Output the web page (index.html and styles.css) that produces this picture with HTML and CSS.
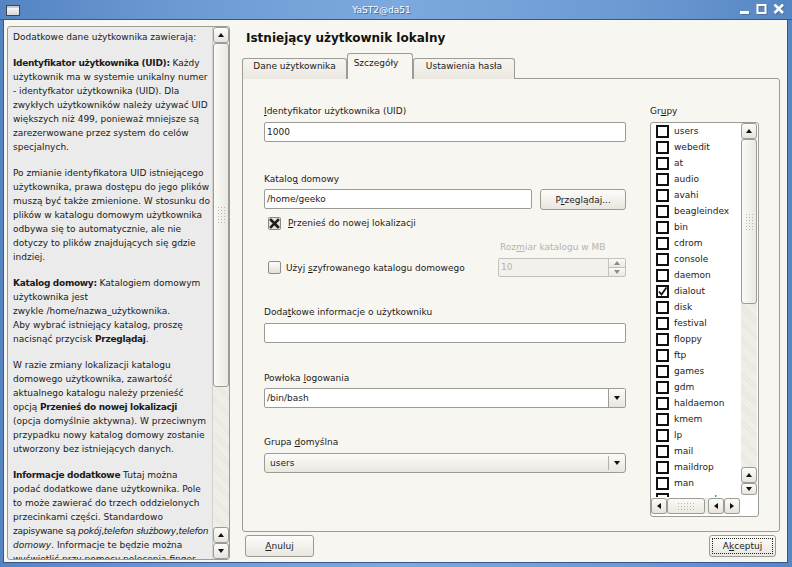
FILE: index.html
```html
<!DOCTYPE html>
<html lang="pl">
<head>
<meta charset="utf-8">
<title>YaST2@da51</title>
<link rel="stylesheet" href="styles.css">
</head>
<body>
<div class="window">
  <div class="titlebar">
    <span class="wicon"></span>
    <span class="wtitle">YaST2@da51</span>
    <span class="wbtns">
      <svg class="wb" width="12" height="12" viewBox="0 0 12 12"><rect x="2" y="8" width="9" height="3" fill="#4d6f9c"/><rect x="1" y="7" width="9" height="3" fill="#fff"/></svg>
      <svg class="wb" width="12" height="12" viewBox="0 0 12 12"><rect x="2.5" y="2" width="8" height="8" fill="none" stroke="#4d6f9c" stroke-width="2"/><rect x="1.5" y="1" width="8" height="8" fill="none" stroke="#fff" stroke-width="2"/></svg>
      <svg class="wb" width="12" height="12" viewBox="0 0 12 12"><path d="M2.5 1.5 L11 10 M11 1.5 L2.5 10" stroke="#4d6f9c" stroke-width="2.6"/><path d="M1.5 0.5 L10 9 M10 0.5 L1.5 9" stroke="#fff" stroke-width="2.6"/></svg>
    </span>
  </div>
  <div class="client">
    <aside class="help">
      <div class="help-text">
        <p>Dodatkowe dane użytkownika zawierają:</p>
        <p><b>Identyfikator użytkownika (UID):</b> Każdy<br>użytkownik ma w systemie unikalny numer<br>- identyfkator użytkownika (UID). Dla<br>zwykłych użytkowników należy używać UID<br>większych niż 499, ponieważ mniejsze są<br>zarezerwowane przez system do celów<br>specjalnych.</p>
        <p>Po zmianie identyfikatora UID istniejącego<br>użytkownika, prawa dostępu do jego plików<br>muszą być także zmienione. W stosunku do<br>plików w katalogu domowym użytkownika<br>odbywa się to automatycznie, ale nie<br>dotyczy to plików znajdujących się gdzie<br>indziej.</p>
        <p><b>Katalog domowy:</b> Katalogiem domowym<br>użytkownika jest<br>zwykle /home/nazwa_użytkownika.<br>Aby wybrać istniejący katalog, proszę<br>nacisnąć przycisk <b>Przeglądaj</b>.</p>
        <p>W razie zmiany lokalizacji katalogu<br>domowego użytkownika, zawartość<br>aktualnego katalogu należy przenieść<br>opcją <b>Przenieś do nowej lokalizacji</b><br>(opcja domyślnie aktywna). W przeciwnym<br>przypadku nowy katalog domowy zostanie<br>utworzony bez istniejących danych.</p>
        <p><b>Informacje dodatkowe</b> Tutaj można<br>podać dodatkowe dane użytkownika. Pole<br>to może zawierać do trzech oddzielonych<br>przecinkami części. Standardowo<br><span class="tight">zapisywane są <i>pokój</i>,<i>telefon służbowy</i>,<i>telefon</i></span><br><i>domowy</i>. Informacje te będzie można<br>wyświetlić przy pomocy polecenia finger.</p>
      </div>
      <div class="vscroll help-scroll">
        <div class="sb-btn"><span class="tri-up"></span></div>
        <div class="sb-thumb help-thumb"><span class="grip"></span></div>
        <div class="sb-trough"></div>
        <div class="sb-btn"><span class="tri-up"></span></div>
        <div class="sb-btn"><span class="tri-down"></span></div>
      </div>
    </aside>

    <section class="main">
      <h1 class="page-title">Istniejący użytkownik lokalny</h1>
      <div class="tabs">
        <div class="tab tab-1">Dane użytkownika</div>
        <div class="tab tab-2 active">Szczegóły</div>
        <div class="tab tab-3">Ustawienia hasła</div>
      </div>
      <div class="notebook">
        <div class="form">
          <div class="lbl"><u>I</u>dentyfikator użytkownika (UID)</div>
          <div class="entry e-uid">1000</div>

          <div class="lbl l-home">Katalo<u>g</u> domowy</div>
          <div class="home-row">
            <div class="entry e-home">/home/geeko</div>
            <div class="btn btn-browse">P<u>r</u>zeglądaj...</div>
          </div>
          <div class="check-row move-row">
            <svg class="xbox" width="13" height="13" viewBox="0 0 13 13"><rect x="0.5" y="0.5" width="12" height="12" rx="1" fill="#e4e2dc" stroke="#8a8883"/><path d="M3 3 L10 10 M10 3 L3 10" stroke="#1e1e1e" stroke-width="2.6" stroke-linecap="square"/></svg>
            <span><u>P</u>rzenieś do nowej lokalizacji</span>
          </div>

          <div class="enc-row">
            <div class="check-row enc-check">
              <span class="cbox"></span>
              <span>Użyj <u>s</u>zyfrowanego katalogu domowego</span>
            </div>
            <div class="size-col">
              <div class="lbl dis">Roz<u>m</u>iar katalogu w MB</div>
              <div class="spin">
                <span class="spin-val">10</span>
                <span class="spin-btns">
                  <span class="spin-b"><span class="tri-up gray"></span></span>
                  <span class="spin-b"><span class="tri-down gray"></span></span>
                </span>
              </div>
            </div>
          </div>

          <div class="lbl l-info">Doda<u>t</u>kowe informacje o użytkowniku</div>
          <div class="entry e-info"></div>

          <div class="lbl l-shell">Powłoka <u>l</u>ogowania</div>
          <div class="combo-entry">
            <span class="ce-text">/bin/bash</span>
            <span class="ce-btn"><span class="tri-down"></span></span>
          </div>

          <div class="lbl l-group">Grupa <u>d</u>omyślna</div>
          <div class="combo">
            <span class="c-text">users</span>
            <span class="c-arrow"><span class="tri-down"></span></span>
          </div>
        </div>

        <div class="groups">
          <div class="lbl">Gr<u>u</u>py</div>
          <div class="glist">
            <div class="viewport">
              <div class="gi"><span class="gcb"></span>users</div>
              <div class="gi"><span class="gcb"></span>webedit</div>
              <div class="gi"><span class="gcb"></span>at</div>
              <div class="gi"><span class="gcb"></span>audio</div>
              <div class="gi"><span class="gcb"></span>avahi</div>
              <div class="gi"><span class="gcb"></span>beagleindex</div>
              <div class="gi"><span class="gcb"></span>bin</div>
              <div class="gi"><span class="gcb"></span>cdrom</div>
              <div class="gi"><span class="gcb"></span>console</div>
              <div class="gi"><span class="gcb"></span>daemon</div>
              <div class="gi"><span class="gcb checked"><svg width="9" height="9" viewBox="0 0 9 9"><path d="M1 4.5 L3.5 7.5 L8.5 0.5" fill="none" stroke="#111" stroke-width="1.8"/></svg></span>dialout</div>
              <div class="gi"><span class="gcb"></span>disk</div>
              <div class="gi"><span class="gcb"></span>festival</div>
              <div class="gi"><span class="gcb"></span>floppy</div>
              <div class="gi"><span class="gcb"></span>ftp</div>
              <div class="gi"><span class="gcb"></span>games</div>
              <div class="gi"><span class="gcb"></span>gdm</div>
              <div class="gi"><span class="gcb"></span>haldaemon</div>
              <div class="gi"><span class="gcb"></span>kmem</div>
              <div class="gi"><span class="gcb"></span>lp</div>
              <div class="gi"><span class="gcb"></span>mail</div>
              <div class="gi"><span class="gcb"></span>maildrop</div>
              <div class="gi"><span class="gcb"></span>man</div>
              <div class="gi"><span class="gcb"></span>messagebus</div>
            </div>
            <div class="vscroll list-scroll">
              <div class="sb-btn"><span class="tri-up"></span></div>
              <div class="sb-thumb list-thumb"><span class="grip"></span></div>
              <div class="sb-trough"></div>
              <div class="sb-btn"><span class="tri-up"></span></div>
              <div class="sb-btn short"><span class="tri-down"></span></div>
            </div>
            <div class="hscroll">
              <div class="hb"><span class="tri-left"></span></div>
              <div class="hthumb"><span class="hgrip"></span></div>
              <div class="hgap"></div>
              <div class="hb"><span class="tri-left"></span></div>
              <div class="hb"><span class="tri-right"></span></div>
            </div>
          </div>
        </div>
      </div>
      <div class="actions">
        <div class="btn btn-cancel"><u>A</u>nuluj</div>
        <div class="btn btn-ok"><span class="focus">A<u>k</u>ceptuj</span></div>
      </div>
    </section>
  </div>
</div>
</body>
</html>
```

FILE: styles.css
```css
* { box-sizing: border-box; }
html, body { margin: 0; padding: 0; }
body {
  width: 792px; height: 567px; overflow: hidden;
  font-family: "DejaVu Sans", sans-serif;
  font-size: 9px;
  color: #1b1b1b;
  background: #5b8ac6;
}
u { text-decoration: underline; text-underline-offset: 1px; }

.window {
  width: 792px; height: 567px;
  display: flex; flex-direction: column;
  background: linear-gradient(90deg, #5484c2 0%, #6b99d2 22%, #7caadf 50%, #6b99d2 80%, #5686c3 100%);
}

/* title bar */
.titlebar {
  height: 20px; flex: none;
  border-bottom: 1px solid #35578a;
  display: flex; align-items: center;
  padding: 0 6px 0 6px;
}
.wicon {
  width: 14px; height: 11px; margin-top: 2px;
  border: 1px solid #41464e;
  background: linear-gradient(#ffffff, #d5d7db);
  box-shadow: inset 0 2px 0 #c9ccd2;
}
.wtitle {
  flex: 1; text-align: center;
  color: #fff; font-size: 9px;
  text-shadow: 1px 1px 0 #44679a;
  padding-left: 4px;
}
.wbtns { display: flex; gap: 5px; margin-right: 1px; margin-top: 1px; }
.wb { display: block; }

/* client */
.client {
  flex: 1;
  margin: 0 4px 4px 3px;
  border: 1px solid #35578a; border-top: 0;
  background: #f8f6f1;
  display: flex;
  padding: 6px 7px 2px 3px;
  gap: 12px;
  min-height: 0;
}

/* help panel */
.help {
  width: 223px;
  border: 1px solid #9d9b95;
  border-radius: 3px;
  background: #ebebeb;
  display: flex;
  overflow: hidden;
}
.help-text {
  flex: 1;
  padding: 3px 0 0 5px;
  line-height: 14px;
  white-space: nowrap;
  overflow: hidden;
  color: #1a1a1a;
}
.help-text p { margin: 0 0 12px; }
.help-text b { letter-spacing: -0.3px; }
.help-text .tight { letter-spacing: -0.25px; }

/* scrollbars */
.vscroll { width: 16px; display: flex; flex-direction: column; background: #efece6; }
.help-scroll { border-left: 1px solid #d2d0ca; width: 17px; }
.sb-btn {
  height: 16px; flex: none;
  border: 1px solid #9d9b95; border-radius: 3px;
  background: linear-gradient(#fdfcfa, #e7e4dd);
  display: flex; align-items: center; justify-content: center;
}
.sb-btn.short { height: 12px; }
.sb-thumb {
  flex: none;
  border: 1px solid #9d9b95; border-radius: 3px;
  background: linear-gradient(90deg, #fbfaf7, #ebe8e1);
  display: flex; align-items: center; justify-content: center;
}
.help-thumb { height: 344px; }
.list-thumb { height: 165px; }
.sb-trough {
  flex: 1;
  background: repeating-linear-gradient(45deg, #f3f1ec 0 1px, #e9e6df 1px 2px);
}
.grip {
  width: 8px; height: 18px;
  background-image: radial-gradient(circle, #b9b6ae 0.6px, transparent 0.9px);
  background-size: 3px 3px;
}
.tri-up { width: 0; height: 0; border-left: 3.5px solid transparent; border-right: 3.5px solid transparent; border-bottom: 4px solid #111; }
.tri-down { width: 0; height: 0; border-left: 3.5px solid transparent; border-right: 3.5px solid transparent; border-top: 4px solid #111; }
.tri-left { width: 0; height: 0; border-top: 3.5px solid transparent; border-bottom: 3.5px solid transparent; border-right: 4px solid #111; }
.tri-right { width: 0; height: 0; border-top: 3.5px solid transparent; border-bottom: 3.5px solid transparent; border-left: 4px solid #111; }
.tri-up.gray { border-bottom-color: #8e8c87; }
.tri-down.gray { border-top-color: #8e8c87; }

/* main */
.main { flex: 1; display: flex; flex-direction: column; min-width: 0; }
.page-title {
  margin: 5px 0 0 4px;
  font-size: 12px; font-weight: bold;
  line-height: 15px;
  color: #111;
  flex: none;
}
.tabs {
  margin-top: 7px;
  height: 26px; flex: none;
  display: flex; align-items: flex-end;
  position: relative; z-index: 1;
  margin-bottom: -1px;
}
.tab {
  height: 21px;
  border: 1px solid #9d9b95; border-bottom: 0;
  border-radius: 3px 3px 0 0;
  background: linear-gradient(#f6f4ef, #ebe8e1);
  text-align: center;
  line-height: 14px;
  padding-top: 0;
  white-space: nowrap;
}
.tab-1 { width: 105px; }
.tab-2 { width: 66px; }
.tab-3 { width: 102px; }
.tab.active {
  height: 26px;
  background: #f8f6f1;
  padding-top: 2px;
  padding-right: 8px;
}
.notebook {
  height: 454px; flex: none;
  border: 1px solid #9d9b95;
  border-radius: 0 3px 3px 3px;
  display: flex;
  padding: 25px 20px 0 21px;
  gap: 24px;
}

.lbl { height: 14px; line-height: 14px; white-space: nowrap; }
.lbl.dis { color: #b5b3ad; padding-left: 2px; }
.form { width: 362px; display: flex; flex-direction: column; }
.entry {
  height: 20px;
  border: 1px solid #9d9b95; border-radius: 2px;
  background: #fff;
  line-height: 18px;
  padding-left: 2px;
  white-space: nowrap;
}
.e-uid { margin-top: 4px; }
.l-home { margin-top: 30px; }
.home-row { margin-top: 3px; display: flex; gap: 8px; align-items: flex-start; }
.e-home { width: 269px; }
.btn {
  border: 1px solid #9d9b95; border-radius: 3px;
  background: linear-gradient(#fdfcfa, #e9e6df);
  display: flex; align-items: center; justify-content: center;
  white-space: nowrap;
}
.btn-browse { width: 86px; height: 21px; }
.check-row { display: flex; align-items: center; height: 14px; white-space: nowrap; }
.move-row { margin-top: 6px; padding-left: 4px; gap: 7px; }
.xbox { display: block; }
.enc-row { margin-top: 10px; display: flex; justify-content: space-between; }
.enc-check { align-self: flex-end; height: 19px; padding-left: 4px; gap: 5px; }
.cbox {
  width: 13px; height: 13px;
  border: 1px solid #8f8d88; border-radius: 2px;
  background: linear-gradient(#fdfcfa, #e2dfd8);
}
.size-col { width: 128px; }
.spin {
  margin-top: 4px;
  height: 19px;
  border: 1px solid #c4c1ba; border-radius: 2px;
  background: #f3f1ec;
  display: flex;
}
.spin-val { flex: 1; color: #b5b3ad; line-height: 17px; padding-left: 2px; }
.spin-btns { width: 17px; display: flex; flex-direction: column; border-left: 1px solid #c4c1ba; }
.spin-b {
  flex: 1; display: flex; align-items: center; justify-content: center;
  background: linear-gradient(#fbfaf7, #ebe8e1);
}
.spin-b + .spin-b { border-top: 1px solid #c4c1ba; }

.l-info { margin-top: 28px; }
.e-info { margin-top: 4px; }
.l-shell { margin-top: 28px; }
.combo-entry {
  margin-top: 3px;
  height: 20px;
  border: 1px solid #9d9b95; border-radius: 2px;
  background: #fff;
  display: flex;
}
.ce-text { flex: 1; line-height: 18px; padding-left: 2px; }
.ce-btn {
  width: 17px;
  border-left: 1px solid #9d9b95;
  background: linear-gradient(#fdfcfa, #e9e6df);
  display: flex; align-items: center; justify-content: center;
}
.l-group { margin-top: 27px; }
.combo {
  margin-top: 4px;
  height: 20px;
  border: 1px solid #9d9b95; border-radius: 3px;
  background: linear-gradient(#fdfcfa, #e9e6df);
  display: flex;
}
.c-text { flex: 1; line-height: 18px; padding-left: 5px; }
.c-arrow {
  width: 17px; margin: 2px 0;
  border-left: 1px solid #b3b0a9;
  display: flex; align-items: center; justify-content: center;
}

/* groups */
.groups { width: 109px; display: flex; flex-direction: column; }
.groups .lbl { padding-left: 0; }
.glist {
  margin-top: 4px;
  height: 395px;
  border: 1px solid #9d9b95; border-radius: 3px;
  background: #fff;
  display: grid;
  grid-template-columns: 89px 17px;
  grid-template-rows: 374px 17px;
  align-content: start;
}
.viewport { overflow: hidden; padding-left: 5px; }
.gi { height: 16px; display: flex; align-items: center; gap: 5px; white-space: nowrap; color: #1b1b1b; }
.gcb {
  width: 13px; height: 13px; flex: none;
  border: 2px solid #111;
  background: #fff;
  display: flex; align-items: center; justify-content: center;
}
.gcb svg { display: block; }
.list-scroll { height: 372px; margin-left: 1px; }
.hscroll {
  grid-column: 1 / 2;
  height: 16px; margin-top: 1px;
  display: flex;
  background: #efece6;
}
.hb {
  width: 16px; flex: none;
  border: 1px solid #9d9b95; border-radius: 3px;
  background: linear-gradient(#fdfcfa, #e7e4dd);
  display: flex; align-items: center; justify-content: center;
}
.hthumb {
  width: 38px; flex: none;
  border: 1px solid #9d9b95; border-radius: 3px;
  background: linear-gradient(#fbfaf7, #ebe8e1);
  display: flex; align-items: center; justify-content: center;
}
.hgrip {
  width: 18px; height: 8px;
  background-image: radial-gradient(circle, #b9b6ae 0.6px, transparent 0.9px);
  background-size: 3px 3px;
}
.hgap { flex: 1; }

/* actions */
.actions {
  margin-top: 3px; flex: none;
  display: flex; justify-content: space-between;
  padding: 0 4px 0 3px;
}
.btn-cancel { width: 69px; height: 22px; }
.btn-ok { width: 67px; height: 22px; padding: 2px; }
.focus {
  flex: 1; align-self: stretch;
  border: 1px dotted #222;
  display: flex; align-items: center; justify-content: center;
}
```
